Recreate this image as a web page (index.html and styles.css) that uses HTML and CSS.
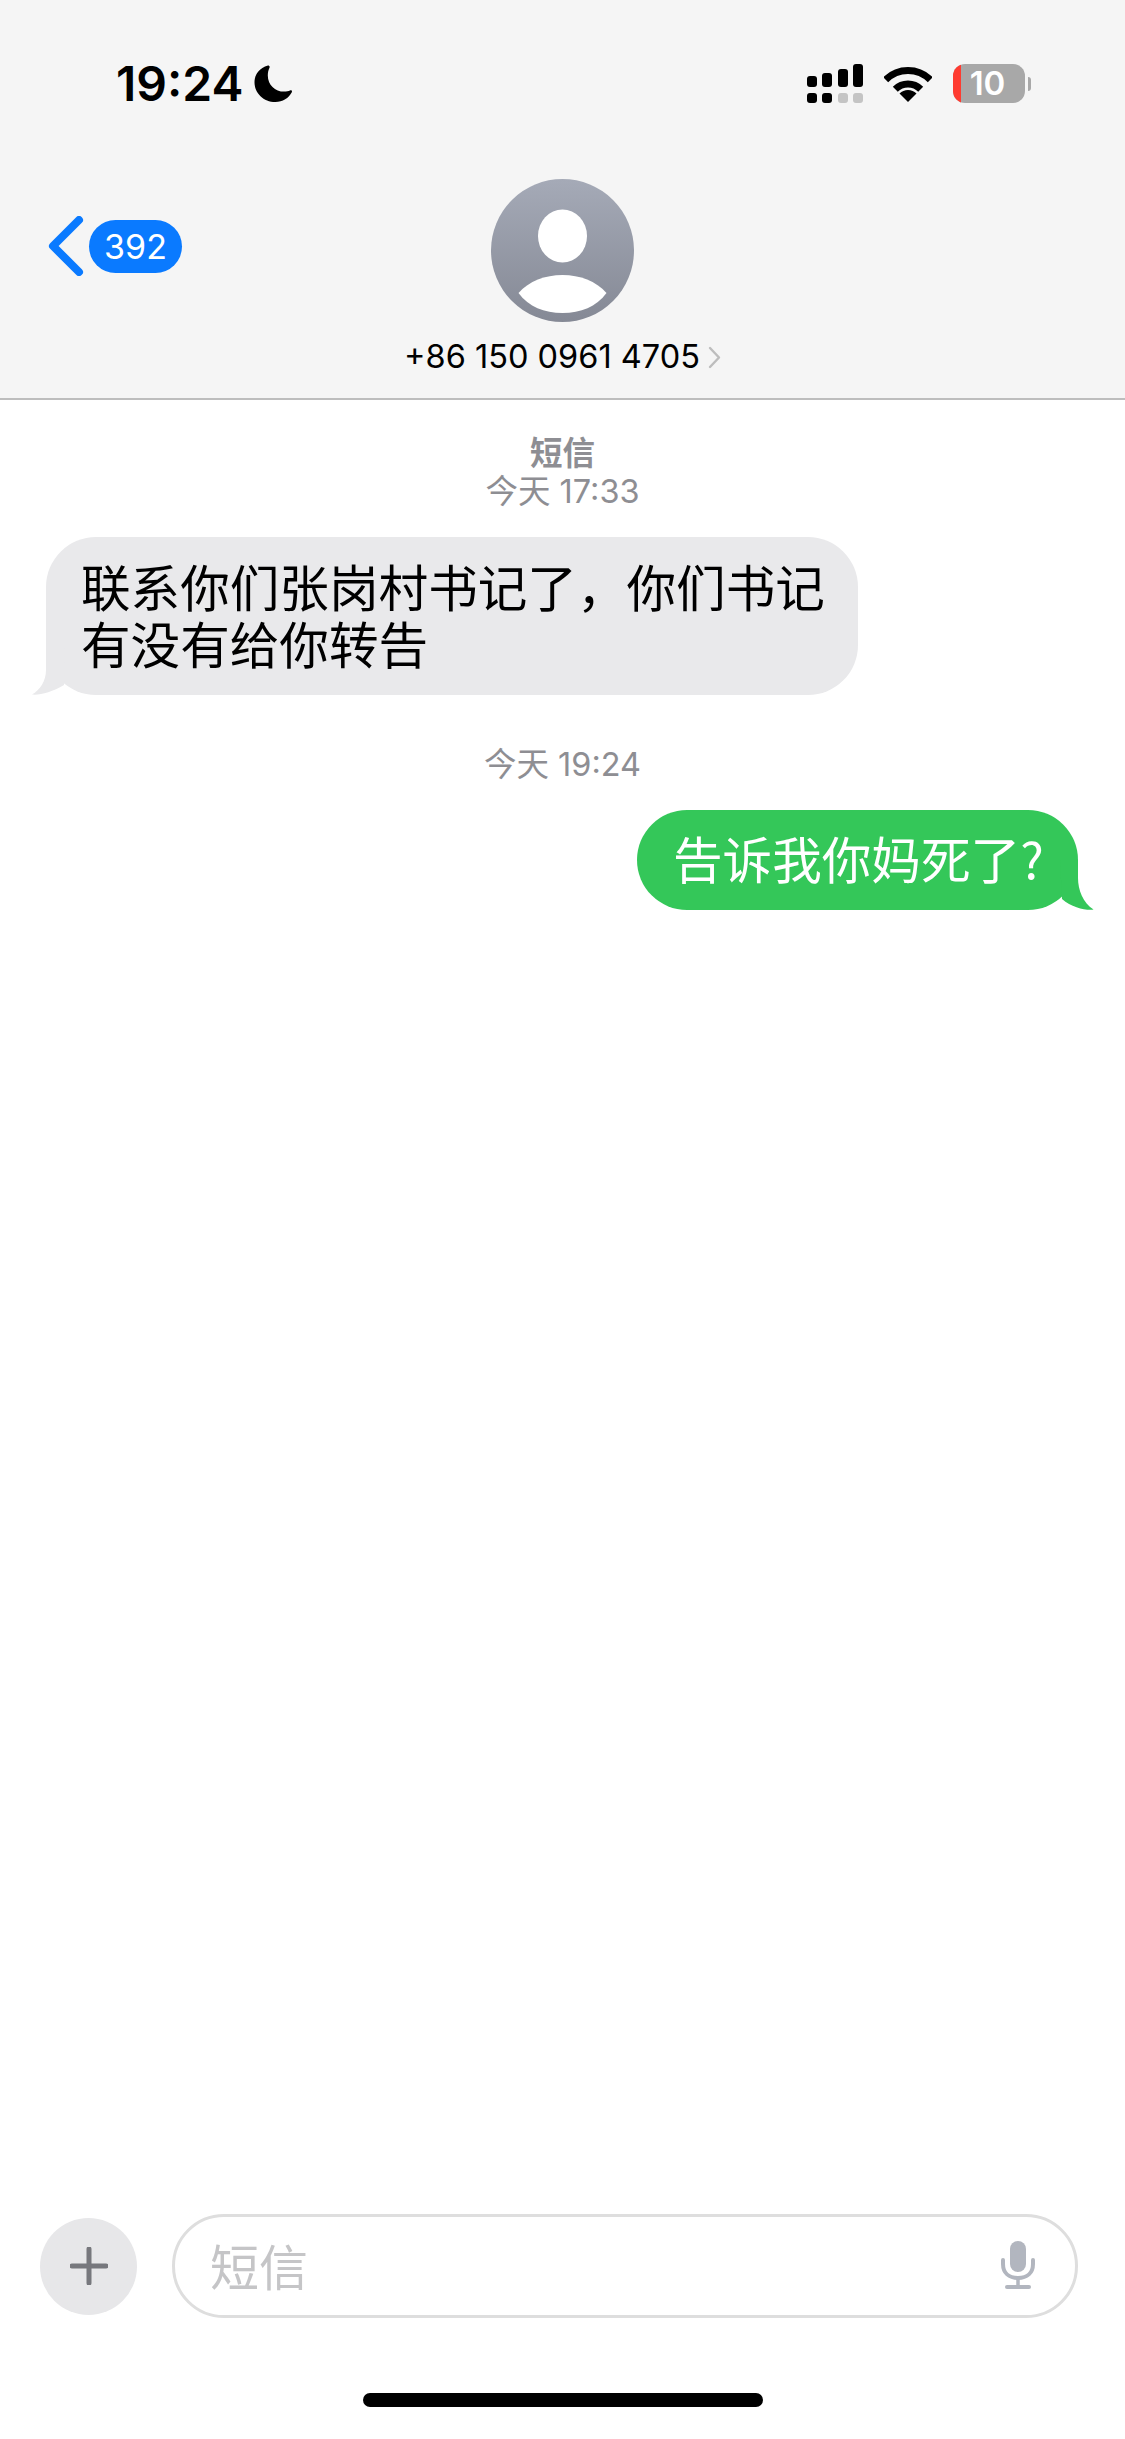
FILE: index.html
```html
<!DOCTYPE html>
<html lang="zh-CN">

<head>
    <meta charset="UTF-8">
    <meta name="viewport" content="width=device-width, initial-scale=1.0">
    <title>短信</title>
    <link rel="stylesheet" href="styles.css">
</head>

<body>

    <div class="phone">
        <header class="top">
            <div class="status">
                <div class="clock">
                    <span class="time">19:24</span>
                    <svg class="moon" viewBox="0 0 38 37"><path fill="#000" d="M14 0.5C15.5 0.5 16 1.6 15.4 3C14.3 5.3 13.8 7.8 13.8 10.4C13.8 19.6 21 26.6 30.2 26.6C32.4 26.6 34.4 26.2 36 25.5C37.4 24.9 38.4 25.8 37.8 27.2C34.8 33 28.6 37 21.4 37C9.6 37 0.5 28.2 0.5 17.2C0.5 9.4 5.6 2.8 14 0.5Z"/></svg>
                </div>
                <div class="indicators">
                    <div class="signal">
                        <div class="sig-top">
                            <i class="bar bar-1"></i>
                            <i class="bar bar-2"></i>
                            <i class="bar bar-3"></i>
                            <i class="bar bar-4"></i>
                        </div>
                        <div class="sig-bottom">
                            <i class="dot"></i>
                            <i class="dot"></i>
                            <i class="dot dim"></i>
                            <i class="dot dim"></i>
                        </div>
                    </div>
                    <svg class="wifi" viewBox="0 0 48 36">
                        <path fill="none" stroke="#000" stroke-width="7" d="M1.7 13.7A31.5 31.5 0 0 1 46.3 13.7"/>
                        <path fill="none" stroke="#000" stroke-width="7" d="M11.3 23.3A18 18 0 0 1 36.7 23.3"/>
                        <path fill="#000" d="M24 36L15.5 27.5A12 12 0 0 1 32.5 27.5Z"/>
                    </svg>
                    <div class="battery-wrap">
                        <div class="battery">
                            <div class="battery-low"></div>
                            <span class="battery-num">10</span>
                        </div>
                        <div class="battery-nub"></div>
                    </div>
                </div>
            </div>

            <div class="nav">
                <div class="back">
                    <svg class="chevron" viewBox="0 0 36 60"><path fill="none" stroke="#0a7aff" stroke-width="8" stroke-linecap="round" stroke-linejoin="round" d="M31 4L5 30L31 56"/></svg>
                    <span class="badge">392</span>
                </div>
                <div class="contact">
                    <svg class="avatar" viewBox="0 0 143 143">
                        <defs>
                            <linearGradient id="avatarFill" x1="0" y1="0" x2="0" y2="1">
                                <stop offset="0" stop-color="#a5aab7"/>
                                <stop offset="1" stop-color="#858995"/>
                            </linearGradient>
                        </defs>
                        <circle cx="71.5" cy="71.5" r="71.5" fill="url(#avatarFill)"/>
                        <ellipse cx="71.5" cy="57" rx="24.5" ry="26.5" fill="#fff"/>
                        <path fill="#fff" d="M27.5 114C38 102 54 96 71.5 96C89 96 105 102 115.5 114C105 128 90 134 71.5 134C53 134 38 128 27.5 114Z"/>
                    </svg>
                    <div class="number">
                        <span>+86 150 0961 4705</span>
                        <svg class="more" viewBox="0 0 13 23"><path fill="none" stroke="#bdbdbd" stroke-width="2.4" stroke-linecap="round" stroke-linejoin="round" d="M2 2L11 11.5L2 21"/></svg>
                    </div>
                </div>
            </div>
        </header>

        <main class="thread">
            <div class="stamp stamp-first">
                <div class="stamp-kind">短信</div>
                <div>今天 17:33</div>
            </div>

            <div class="row row-in">
                <div class="bubble bubble-in">
                    联系你们张岗村书记了，你们书记<br>有没有给你转告
                    <svg class="tail" viewBox="0 0 34 50"><path fill="#e9e9eb" d="M15 0V25C15 36 9 45 1 49.6C9 50.5 21 47 33 40L34 0Z"/></svg>
                </div>
            </div>

            <div class="stamp stamp-second">今天 19:24</div>

            <div class="row row-out">
                <div class="bubble bubble-out">
                    告诉我你妈死了?
                    <svg class="tail" viewBox="0 0 34 50"><path fill="#34c759" d="M18 0V18C18 30 23 43 33.5 49.6C26 50.5 12 48 2 39L0 0Z"/></svg>
                </div>
            </div>
        </main>

        <footer class="composer">
            <div class="plus">
                <svg class="plus-icon" viewBox="0 0 38 38"><path fill="none" stroke="#77787d" stroke-width="5" stroke-linecap="round" d="M19 2V36M2 19H36"/></svg>
            </div>
            <div class="field">
                <span class="hint">短信</span>
                <svg class="mic" viewBox="0 0 34 48">
                    <rect x="9" y="0" width="16" height="31" rx="8" fill="#b2b6bf"/>
                    <path fill="none" stroke="#b2b6bf" stroke-width="4" stroke-linecap="round" d="M2 19V23C2 32 8 37 17 37C26 37 32 32 32 23V19"/>
                    <path fill="none" stroke="#b2b6bf" stroke-width="3.5" d="M17 37V45"/>
                    <path fill="none" stroke="#b2b6bf" stroke-width="4" stroke-linecap="round" d="M6 46H28"/>
                </svg>
            </div>
        </footer>

        <div class="home-row">
            <div class="home-bar"></div>
        </div>
    </div>

</body>

</html>
```

FILE: styles.css
```css
body {
    margin: 0;
    background-color: #fff;
    font-family: 'Inter', 'Noto Sans CJK SC', sans-serif;
    color: #000;
}

.phone {
    width: 1125px;
    height: 2439px;
    display: flex;
    flex-direction: column;
    overflow: hidden;
}

/* header */
.top {
    height: 398px;
    box-sizing: content-box;
    background-color: #f5f5f5;
    border-bottom: 2px solid #bdbdbd;
}

.status {
    display: flex;
    justify-content: space-between;
    align-items: flex-start;
    padding: 64px 94px 0 116px;
}

.clock {
    display: flex;
    align-items: center;
    gap: 11px;
    height: 39px;
}

.time {
    font-size: 48px;
    font-weight: 600;
    line-height: 39px;
}

.moon {
    width: 38px;
    height: 37px;
}

.indicators {
    display: flex;
    align-items: flex-start;
}

.signal {
    width: 56px;
    height: 39px;
    display: flex;
    flex-direction: column;
    justify-content: space-between;
}

.sig-top,
.sig-bottom {
    display: flex;
    justify-content: space-between;
}

.sig-top {
    height: 23px;
    align-items: flex-end;
}

.bar,
.dot {
    display: block;
    width: 10px;
    border-radius: 3px;
    background-color: #000;
}

.bar-1 { height: 11px; }
.bar-2 { height: 14px; }
.bar-3 { height: 18px; }
.bar-4 { height: 23px; }

.dot {
    height: 10px;
}

.dot.dim {
    background-color: #c4c4c4;
}

.wifi {
    width: 48px;
    height: 36px;
    margin: 2px 0 0 21px;
}

.battery-wrap {
    display: flex;
    align-items: center;
    margin-left: 21px;
    height: 39px;
}

.battery {
    width: 72px;
    height: 39px;
    border-radius: 12px;
    background-color: #a8a8a8;
    overflow: hidden;
    display: flex;
    align-items: center;
}

.battery-low {
    width: 8px;
    height: 100%;
    background-color: #ff3b30;
}

.battery-num {
    flex: 1;
    text-align: center;
    padding-right: 11px;
    color: #fff;
    font-size: 33px;
    font-weight: 600;
    line-height: 39px;
}

.battery-nub {
    width: 3px;
    height: 14px;
    margin-left: 3px;
    border-radius: 0 3px 3px 0;
    background-color: #a8a8a8;
}

.nav {
    display: grid;
    grid-template-columns: 1fr auto 1fr;
    margin-top: 76px;
}

.back {
    display: flex;
    align-items: center;
    gap: 5px;
    height: 60px;
    margin-top: 37px;
    padding-left: 48px;
}

.chevron {
    width: 36px;
    height: 60px;
}

.badge {
    width: 93px;
    height: 53px;
    border-radius: 27px;
    background-color: #0a7aff;
    color: #fff;
    font-size: 34px;
    line-height: 53px;
    text-align: center;
}

.contact {
    display: flex;
    flex-direction: column;
    align-items: center;
}

.avatar {
    width: 143px;
    height: 143px;
}

.number {
    display: flex;
    align-items: center;
    gap: 8px;
    margin-top: 13px;
    font-size: 32.5px;
    line-height: 44px;
}

.more {
    width: 13px;
    height: 23px;
}

/* messages */
.thread {
    flex: 1;
}

.stamp {
    text-align: center;
    font-size: 32.5px;
    line-height: 38px;
    color: #8e8e93;
}

.stamp-first {
    margin-top: 35px;
}

.stamp-kind {
    font-weight: 600;
}

.stamp-second {
    margin-top: 51px;
}

.row {
    display: flex;
}

.row-in {
    margin-top: 26px;
    padding-left: 46px;
}

.row-out {
    justify-content: flex-end;
    margin-top: 26px;
    padding-right: 47px;
}

.bubble {
    position: relative;
    font-family: 'Noto Sans CJK SC', sans-serif;
    font-size: 49.6px;
    line-height: 57px;
    white-space: nowrap;
}

.bubble-in {
    width: 812px;
    height: 158px;
    box-sizing: border-box;
    padding: 20px 0 0 35px;
    border-radius: 50px;
    background-color: #e9e9eb;
}

.bubble-out {
    width: 441px;
    height: 100px;
    box-sizing: border-box;
    padding: 19px 0 0 36px;
    border-radius: 50px;
    background-color: #34c759;
    color: #fff;
}

.tail {
    position: absolute;
    bottom: 0;
    width: 34px;
    height: 50px;
}

.bubble-in .tail {
    left: -15px;
}

.bubble-out .tail {
    right: -16px;
}

/* input */
.composer {
    display: flex;
    align-items: center;
    gap: 35px;
    padding: 0 47px 0 40px;
}

.plus {
    width: 97px;
    height: 97px;
    border-radius: 50%;
    background-color: #e7e7e9;
    display: flex;
    align-items: center;
    justify-content: center;
}

.plus-icon {
    width: 38px;
    height: 38px;
}

.field {
    flex: 1;
    height: 104px;
    box-sizing: border-box;
    border: 3px solid #dedede;
    border-radius: 52px;
    display: flex;
    align-items: center;
    justify-content: space-between;
    padding: 0 40px 3px 35px;
}

.hint {
    font-family: 'Noto Sans CJK SC', sans-serif;
    font-size: 49px;
    color: #c5c5c7;
}

.mic {
    width: 34px;
    height: 48px;
}

.home-row {
    height: 121px;
    display: flex;
    justify-content: center;
    padding-top: 75px;
    box-sizing: border-box;
}

.home-bar {
    width: 400px;
    height: 14px;
    border-radius: 7px;
    background-color: #000;
}
```
